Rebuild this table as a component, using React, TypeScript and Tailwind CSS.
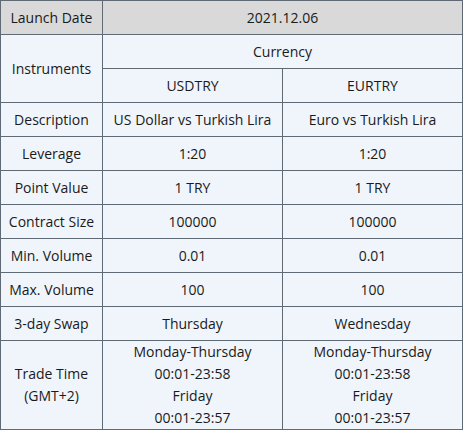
const rows = [
  ["Description", "US Dollar vs Turkish Lira", "Euro vs Turkish Lira"],
  ["Leverage", "1:20", "1:20"],
  ["Point Value", "1 TRY", "1 TRY"],
  ["Contract Size", "100000", "100000"],
  ["Min. Volume", "0.01", "0.01"],
  ["Max. Volume", "100", "100"],
  ["3-day Swap", "Thursday", "Wednesday"],
];

const tradeTime = ["Monday-Thursday", "00:01-23:58", "Friday", "00:01-23:57"];

const cell = "flex items-center justify-center text-center bg-[#f0f5fc]";

export default function App() {
  return (
    <div
      className="w-[463px] h-[430px] bg-[#5f6a75] p-px grid gap-px grid-cols-[101px_179px_179px] grid-rows-[repeat(10,33px)_88px] text-[14px] leading-[22px] text-[#1a1a1a]"
      style={{ fontFamily: '"Open Sans", "Noto Sans", sans-serif' }}
    >
      <div className={`${cell} !bg-[#d9d9d9]`}>Launch Date</div>
      <div className={`${cell} col-span-2 !bg-[#d9d9d9]`}>2021.12.06</div>

      <div className={`${cell} row-span-2`}>Instruments</div>
      <div className={`${cell} col-span-2`}>Currency</div>
      <div className={cell}>USDTRY</div>
      <div className={cell}>EURTRY</div>

      {rows.map((r) =>
        r.map((v, i) => (
          <div key={r[0] + i} className={cell}>
            {v}
          </div>
        ))
      )}

      <div className={`${cell} flex-col`}>
        <span>Trade Time</span>
        <span>(GMT+2)</span>
      </div>
      {[0, 1].map((k) => (
        <div key={k} className={`${cell} flex-col`}>
          {tradeTime.map((t) => (
            <span key={t}>{t}</span>
          ))}
        </div>
      ))}
    </div>
  );
}
